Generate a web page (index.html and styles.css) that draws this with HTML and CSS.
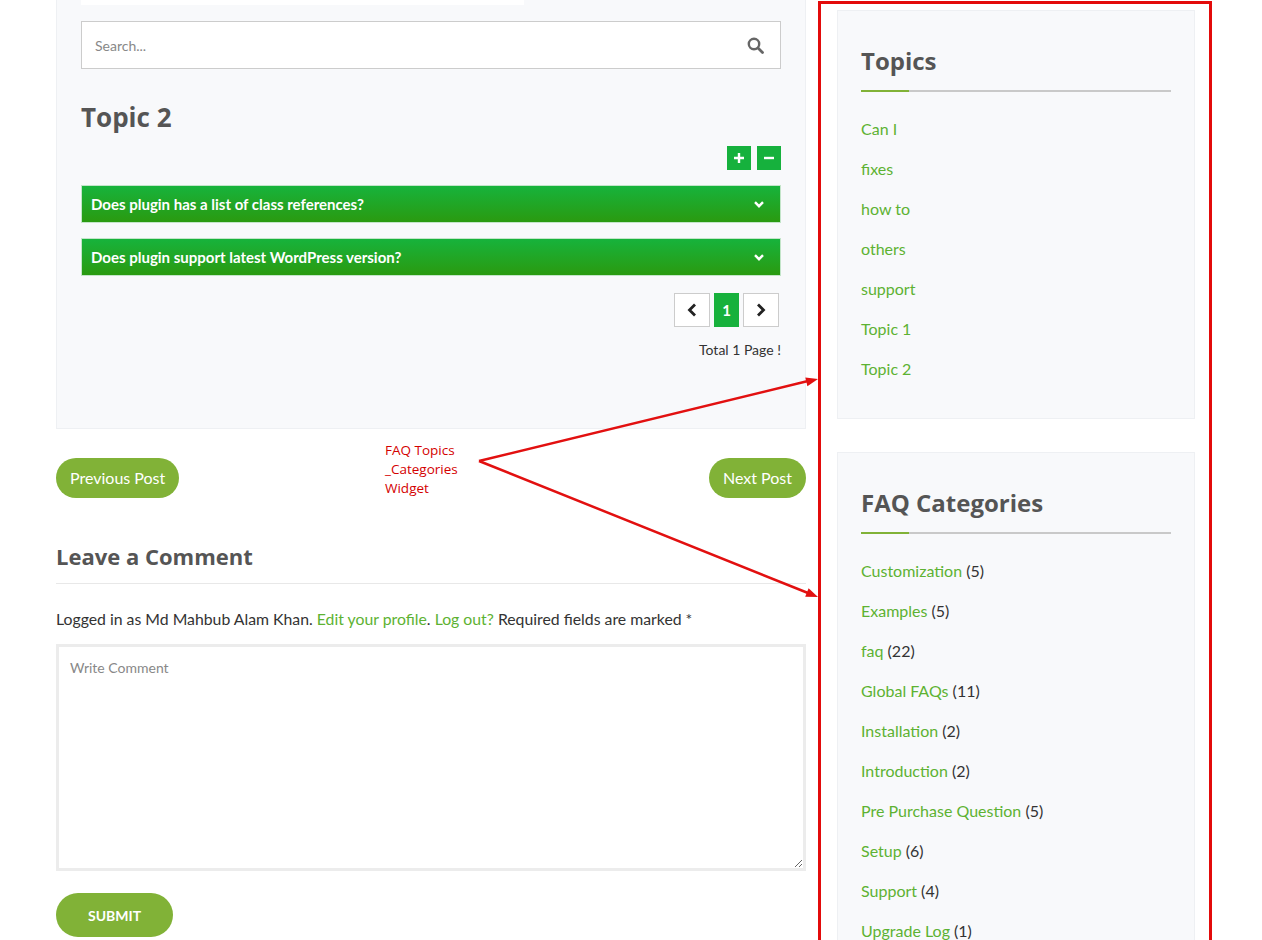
FILE: index.html
```html
<!DOCTYPE html>
<html lang="en">

<head>
    <meta charset="UTF-8">
    <meta name="viewport" content="width=device-width, initial-scale=1.0">
    <title>Topic 2 - FAQ</title>
    <link rel="stylesheet" href="styles.css">
</head>

<body>
    <div class="page">
        <div class="main">
            <div class="faq-panel">
                <div class="panel-top"></div>
                <form class="faq-search">
                    <input type="text" placeholder="Search...">
                    <span class="search-icon">
                        <svg width="17" height="17" viewBox="0 0 17 17">
                            <circle cx="7" cy="7" r="5.2" fill="none" stroke="#666" stroke-width="2.4" />
                            <path d="M11 11l4.5 4.5" stroke="#666" stroke-width="2.8" stroke-linecap="round" />
                        </svg>
                    </span>
                </form>

                <h2 class="faq-title">Topic 2</h2>

                <div class="faq-toggle">
                    <span class="toggle-btn">
                        <svg width="10" height="10" viewBox="0 0 10 10"><path d="M5 0v10M0 5h10" stroke="#fff" stroke-width="2.4" /></svg>
                    </span>
                    <span class="toggle-btn">
                        <svg width="10" height="10" viewBox="0 0 10 10"><path d="M0 5h10" stroke="#fff" stroke-width="2.4" /></svg>
                    </span>
                </div>

                <div class="faq-item">
                    <span>Does plugin has a list of class references?</span>
                    <svg width="10" height="7" viewBox="0 0 10 7"><path d="M1 1.2l4 4 4-4" fill="none" stroke="#fff" stroke-width="2.4" /></svg>
                </div>
                <div class="faq-item">
                    <span>Does plugin support latest WordPress version?</span>
                    <svg width="10" height="7" viewBox="0 0 10 7"><path d="M1 1.2l4 4 4-4" fill="none" stroke="#fff" stroke-width="2.4" /></svg>
                </div>

                <div class="pager">
                    <a class="pager-btn" href="#">
                        <svg width="10" height="14" viewBox="0 0 10 14"><path d="M8 1.5L2.5 7 8 12.5" fill="none" stroke="#222" stroke-width="2.8" /></svg>
                    </a>
                    <span class="pager-num">1</span>
                    <a class="pager-btn" href="#">
                        <svg width="10" height="14" viewBox="0 0 10 14"><path d="M2 1.5L7.5 7 2 12.5" fill="none" stroke="#222" stroke-width="2.8" /></svg>
                    </a>
                </div>
                <p class="pager-total">Total 1 Page !</p>
            </div>

            <div class="post-nav">
                <a class="post-btn" href="#">Previous Post</a>
                <a class="post-btn" href="#">Next Post</a>
            </div>

            <div class="comments">
                <h3 class="comments-title">Leave a Comment</h3>
                <p class="logged-in">Logged in as Md Mahbub Alam Khan. <a href="#">Edit your profile</a>. <a href="#">Log out?</a> Required fields are marked *</p>
                <textarea class="comment-box" placeholder="Write Comment"></textarea>
                <button class="submit" type="button">SUBMIT</button>
            </div>
        </div>

        <aside class="sidebar">
            <div class="widget">
                <h3 class="widget-title">Topics</h3>
                <ul class="widget-list">
                    <li><a href="#">Can I</a></li>
                    <li><a href="#">fixes</a></li>
                    <li><a href="#">how to</a></li>
                    <li><a href="#">others</a></li>
                    <li><a href="#">support</a></li>
                    <li><a href="#">Topic 1</a></li>
                    <li><a href="#">Topic 2</a></li>
                </ul>
            </div>
            <div class="widget">
                <h3 class="widget-title">FAQ Categories</h3>
                <ul class="widget-list">
                    <li><a href="#">Customization</a> (5)</li>
                    <li><a href="#">Examples</a> (5)</li>
                    <li><a href="#">faq</a> (22)</li>
                    <li><a href="#">Global FAQs</a> (11)</li>
                    <li><a href="#">Installation</a> (2)</li>
                    <li><a href="#">Introduction</a> (2)</li>
                    <li><a href="#">Pre Purchase Question</a> (5)</li>
                    <li><a href="#">Setup</a> (6)</li>
                    <li><a href="#">Support</a> (4)</li>
                    <li><a href="#">Upgrade Log</a> (1)</li>
                </ul>
            </div>
        </aside>

        <!-- annotation over the page -->
        <div class="note">FAQ Topics<br>_Categories<br>Widget</div>
        <svg class="arrows" width="1262" height="940" viewBox="0 0 1262 940">
            <path d="M479 461L808 381M479 461L808 593" fill="none" stroke="#e21010" stroke-width="2.5" />
            <polygon points="818,379 807.4,386.2 805.3,377.4" fill="#e21010" />
            <polygon points="818,597 805.2,596.7 808.6,588.3" fill="#e21010" />
        </svg>
    </div>
</body>

</html>
```

FILE: styles.css
```css
* {
    margin: 0;
    padding: 0;
    box-sizing: border-box;
}

html,
body {
    overflow: hidden;
}

body {
    font-family: Lato, "Open Sans", sans-serif;
    color: #333;
    background-color: #fff;
}

a {
    color: #5db232;
    text-decoration: none;
}

.page {
    position: relative;
    display: flex;
    align-items: flex-start;
    gap: 12px;
    padding-left: 56px;
}

.main {
    width: 750px;
    flex: none;
}

/* faq panel */
.faq-panel {
    background-color: #f8f9fb;
    border: 1px solid #eef0f3;
    border-top: 0;
    padding: 0 24px 69px;
}

.panel-top {
    width: 443px;
    height: 5px;
    background-color: #fff;
}

.faq-search {
    display: flex;
    align-items: center;
    height: 48px;
    margin-top: 16px;
    padding-right: 16px;
    background-color: #fff;
    border: 1px solid #ccc;
}

.faq-search input {
    flex: 1;
    height: 100%;
    border: 0;
    outline: none;
    background: transparent;
    padding-left: 13px;
    font-family: Lato, sans-serif;
    font-size: 14px;
    color: #333;
}

.faq-search input::placeholder {
    color: #888;
}

.search-icon {
    display: flex;
}

.faq-title {
    margin-top: 31px;
    font-family: "Open Sans", sans-serif;
    font-size: 26px;
    line-height: 34px;
    font-weight: 700;
    color: #555;
}

.faq-toggle {
    display: flex;
    justify-content: flex-end;
    gap: 6px;
    margin-top: 12px;
}

.toggle-btn {
    width: 24px;
    height: 24px;
    display: flex;
    align-items: center;
    justify-content: center;
    background-color: #16b13d;
}

.faq-item {
    display: flex;
    align-items: center;
    justify-content: space-between;
    height: 38px;
    margin-top: 15px;
    padding: 0 16px 0 9px;
    background: linear-gradient(#17b33c, #2a9a10);
    border: 1px solid #c3e5c9;
    color: #fff;
    font-size: 15px;
    font-weight: 700;
}

.pager {
    display: flex;
    justify-content: flex-end;
    gap: 4px;
    margin: 17px 2px 0 0;
}

.pager-btn {
    width: 36px;
    height: 34px;
    display: flex;
    align-items: center;
    justify-content: center;
    background-color: #fff;
    border: 1px solid #ccc;
}

.pager-num {
    width: 25px;
    height: 34px;
    display: flex;
    align-items: center;
    justify-content: center;
    background-color: #17b13c;
    color: #fff;
    font-size: 15px;
    font-weight: 700;
}

.pager-total {
    margin-top: 14px;
    text-align: right;
    font-size: 14px;
    line-height: 18px;
}

/* post nav */
.post-nav {
    display: flex;
    justify-content: space-between;
    margin-top: 29px;
}

.post-btn {
    height: 40px;
    line-height: 40px;
    padding: 0 14px;
    border-radius: 20px;
    background-color: #81b237;
    color: #fff;
    font-size: 16px;
}

/* comments */
.comments-title {
    margin-top: 43px;
    padding-bottom: 12px;
    border-bottom: 1px solid #e8e8e8;
    font-family: "Open Sans", sans-serif;
    font-size: 22px;
    line-height: 30px;
    font-weight: 700;
    color: #555;
}

.logged-in {
    margin-top: 24px;
    font-size: 15.8px;
    line-height: 22px;
}

.comment-box {
    display: block;
    width: 100%;
    height: 227px;
    margin-top: 14px;
    padding: 12px 11px;
    border: 3px solid #ececec;
    outline: none;
    font-family: Lato, sans-serif;
    font-size: 14px;
    line-height: 18px;
    color: #333;
}

.comment-box::placeholder {
    color: #888;
}

.submit {
    display: block;
    width: 117px;
    height: 44px;
    margin-top: 22px;
    border: 0;
    border-radius: 22px;
    background-color: #81b237;
    color: #fff;
    font-family: Lato, sans-serif;
    font-size: 14px;
    font-weight: 700;
}

/* sidebar */
.sidebar {
    width: 394px;
    flex: none;
    min-height: 1100px;
    margin-top: 1px;
    padding: 6px 14px 0 16px;
    border: 3px solid #e30b0b;
    border-bottom: 0;
}

.widget {
    background-color: #f8f9fb;
    border: 1px solid #eef0f3;
    padding: 34px 23px 29px;
}

.widget+.widget {
    margin-top: 33px;
}

.widget-title {
    padding-bottom: 15px;
    font-family: "Open Sans", sans-serif;
    font-size: 24px;
    line-height: 32px;
    font-weight: 700;
    color: #555;
    background-image: linear-gradient(#81b237, #81b237), linear-gradient(#c9c9c9, #c9c9c9);
    background-size: 48px 2px, 100% 2px;
    background-position: left bottom, left bottom;
    background-repeat: no-repeat;
}

.widget-list {
    list-style: none;
    margin-top: 17px;
}

.widget-list li {
    font-size: 16px;
    line-height: 40px;
}

/* annotation */
.note {
    position: absolute;
    left: 385px;
    top: 441px;
    font-family: "Open Sans", sans-serif;
    font-size: 13.5px;
    line-height: 19px;
    color: #d40000;
}

.arrows {
    position: absolute;
    left: 0;
    top: 0;
    pointer-events: none;
}
```
